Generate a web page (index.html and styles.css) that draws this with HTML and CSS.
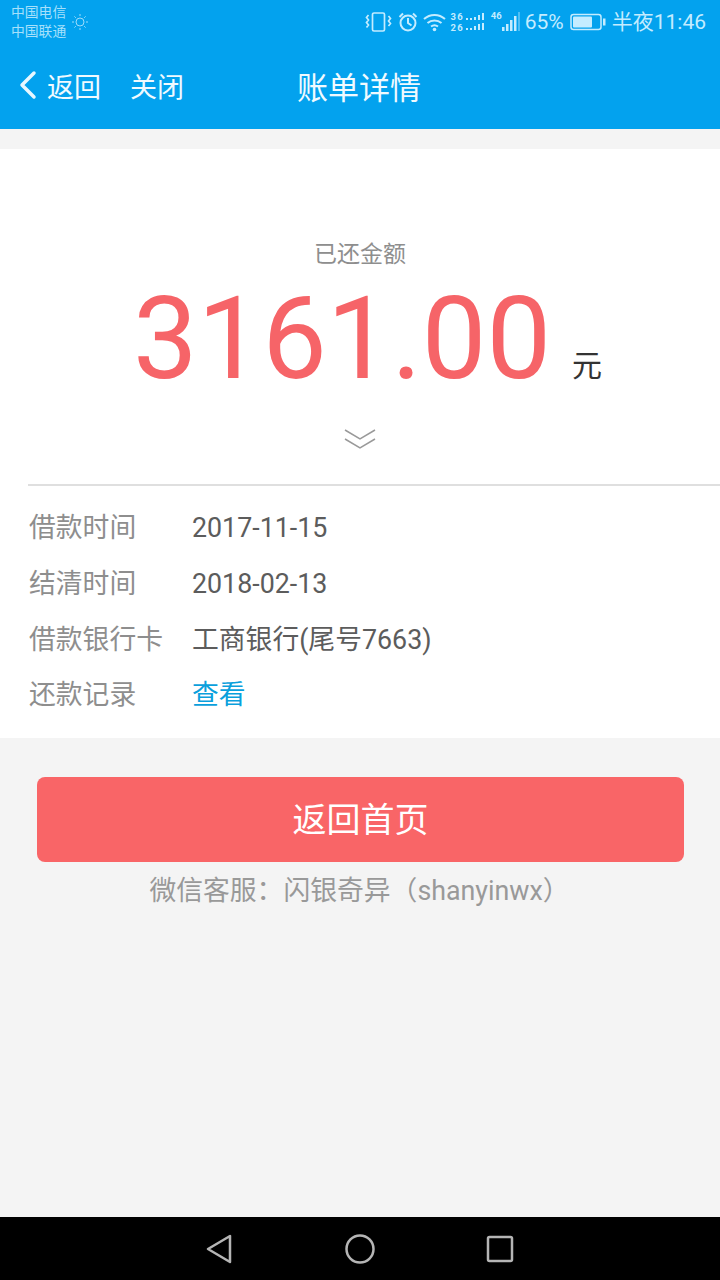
FILE: index.html
```html
<!DOCTYPE html>
<html>
	<head>
		<meta charset="utf-8">
		<title>账单详情</title>
		<link rel="stylesheet" href="styles.css">
	</head>
	<body>
		<div class="Phone">
			<div class="Header">
				<div class="StatusBar">
					<div class="Carrier">
						<div>中国电信</div>
						<div>中国联通</div>
					</div>
					<svg class="SunIcon" width="18" height="18" viewBox="0 0 18 18" fill="none" stroke="#9fdcfb" stroke-width="1">
						<circle cx="9" cy="9" r="4"/>
						<path d="M9 1v2M9 15v2M1 9h2M15 9h2M3.400 3.400l1.400 1.400M13.200 13.200l1.400 1.400M3.400 14.600l1.400-1.400M13.200 4.800l1.400-1.400"/>
					</svg>
					<div class="StatusRight">
						<svg class="IconVibrate" width="27" height="22" viewBox="0 0 27 22" fill="none" stroke="#c4ecff" stroke-width="1.700">
							<rect x="7.500" y="2" width="12" height="18" rx="1.500"/>
							<path d="M3.500 4l-2 2.500 2 2.500-2 2.500 2 2.500-2 2.500M23.500 5l2 2.500-2 2.500 2 2.500-2 2.500"/>
						</svg>
						<svg class="IconAlarm" width="20" height="22" viewBox="0 0 20 22" fill="none" stroke="#c4ecff" stroke-width="2">
							<circle cx="10" cy="12" r="7.500"/>
							<path d="M10 7v5l3.500 2.500M1.500 6l3.500-3.500M18.500 6l-3.500-3.500"/>
						</svg>
						<svg class="IconWifi" width="23" height="20" viewBox="0 0 23 20" fill="none" stroke="#c4ecff" stroke-width="2">
							<path d="M1 7c6-5.500 15-5.500 21 0M4.500 11c4-3.500 10-3.500 14 0M8 14.500c2-1.500 5-1.500 7 0"/>
							<circle cx="11.500" cy="17.500" r="1.800" fill="#c4ecff" stroke="none"/>
						</svg>
						<div class="Signal">
							<div class="SignalLabels"><span>36</span><span>26</span></div>
							<svg width="20" height="20" viewBox="0 0 20 20" fill="#c4ecff">
								<rect x="1" y="6" width="2" height="2"/><rect x="5" y="6" width="2" height="2"/><rect x="9" y="5" width="2" height="3"/><rect x="13" y="3" width="2" height="5"/><rect x="17" y="1" width="2" height="7"/>
								<rect x="1" y="16" width="2" height="2"/><rect x="5" y="16" width="2" height="2"/><rect x="9" y="14" width="2" height="4"/><rect x="13" y="12" width="2" height="6"/><rect x="17" y="11" width="2" height="7"/>
							</svg>
						</div>
						<div class="Signal Signal4g">
							<span class="Label4g">46</span>
							<svg width="18" height="22" viewBox="0 0 18 22" fill="#c4ecff">
								<rect x="0" y="16" width="2.500" height="4"/><rect x="4" y="13" width="2.500" height="7"/><rect x="8" y="9" width="2.500" height="11"/><rect x="12" y="5" width="2.500" height="15"/><rect x="16" y="1" width="2" height="19" opacity=".4"/>
							</svg>
						</div>
						<span class="StatusText Percent">65%</span>
						<svg class="IconBattery" width="36" height="18" viewBox="0 0 36 18">
							<rect x="1" y="1.500" width="30" height="15" rx="2.500" fill="none" stroke="#c4ecff" stroke-width="1.500"/>
							<rect x="3" y="3.500" width="19" height="11" rx="1" fill="#c4ecff"/>
							<rect x="33" y="5.500" width="2.500" height="7" fill="#c4ecff"/>
						</svg>
						<span class="StatusText Clock">半夜11:46</span>
					</div>
				</div>
				<div class="NavBar">
					<div class="NavLeft">
						<svg class="BackIcon" width="18" height="30" viewBox="0 0 18 30" fill="none" stroke="#e8f7ff" stroke-width="3.500" stroke-linecap="round" stroke-linejoin="round">
							<path d="M15 3L3 15l12 12"/>
						</svg>
						<span>返回</span>
						<span class="NavClose">关闭</span>
					</div>
					<div class="NavTitle">账单详情</div>
				</div>
			</div>

			<div class="Content">
				<div class="Card">
					<div class="AmountBlock">
						<div class="AmountLabel">已还金额</div>
						<div class="AmountRow">
							<span class="AmountValue">3161.00</span>
							<span class="AmountUnit">元</span>
						</div>
						<svg class="MoreIcon" width="32" height="22" viewBox="0 0 32 22" fill="none" stroke="#999" stroke-width="1.500">
							<path d="M1 2l15 9 15-9M1 11l15 9 15-9"/>
						</svg>
					</div>
					<div class="Details">
						<div class="DetailRow"><span class="DetailKey">借款时间</span><span class="DetailVal">2017-11-15</span></div>
						<div class="DetailRow"><span class="DetailKey">结清时间</span><span class="DetailVal">2018-02-13</span></div>
						<div class="DetailRow"><span class="DetailKey">借款银行卡</span><span class="DetailVal">工商银行(尾号7663)</span></div>
						<div class="DetailRow"><span class="DetailKey">还款记录</span><span class="DetailVal DetailLink">查看</span></div>
					</div>
				</div>
				<div class="Actions">
					<div class="ButtonRed">返回首页</div>
					<div class="Service">微信客服：闪银奇异（shanyinwx）</div>
				</div>
			</div>

			<div class="BottomBar">
				<svg width="30" height="32" viewBox="0 0 30 32" fill="none" stroke="#b5b5b5" stroke-width="2.500" stroke-linejoin="round">
					<path d="M26 3v26L4 16z"/>
				</svg>
				<svg width="32" height="32" viewBox="0 0 32 32" fill="none" stroke="#b5b5b5" stroke-width="2.500">
					<circle cx="16" cy="16" r="13.500"/>
				</svg>
				<svg width="28" height="28" viewBox="0 0 28 28" fill="none" stroke="#b5b5b5" stroke-width="2.500" stroke-linejoin="round">
					<rect x="2" y="2" width="24" height="24" rx="1.500"/>
				</svg>
			</div>
		</div>
	</body>
</html>
```

FILE: styles.css
```css
body {
	margin: 0;
	font-family: Roboto, "Noto Sans CJK SC", sans-serif;
}

.Phone {
	width: 720px;
	height: 1280px;
	display: flex;
	flex-direction: column;
	background-color: #f4f4f4;
	overflow: hidden;
}

.Header {
	height: 129px;
	flex-shrink: 0;
	background-color: #03a2ee;
}

.StatusBar {
	height: 43px;
	display: flex;
	align-items: center;
	padding: 0 14px 0 11px;
}

.Carrier {
	font-size: 13.800px;
	line-height: 19px;
	color: #a6e0fb;
	padding-top: 1px;
}

.SunIcon {
	margin: 0 0 0 5px;
}

.StatusRight {
	margin-left: auto;
	display: flex;
	align-items: center;
	color: #c4ecff;
}

.StatusText {
	font-size: 21px;
	line-height: 24px;
}

.IconAlarm {
	margin-left: 6px;
}

.IconWifi {
	margin-left: 5px;
}

.Percent {
	margin-left: 5px;
}

.IconBattery {
	margin-left: 6px;
}

.Clock {
	margin-left: 6px;
}

.Signal {
	display: flex;
	align-items: center;
	gap: 1px;
	margin-left: 4px;
}

.Signal4g {
	margin-left: 6px;
	gap: 0;
}

.SignalLabels {
	display: flex;
	flex-direction: column;
	gap: 2px;
	font-size: 9.500px;
	line-height: 9px;
	font-weight: 700;
	letter-spacing: 1.200px;
}

.Label4g {
	font-size: 9.500px;
	line-height: 10px;
	font-weight: 700;
	align-self: flex-start;
}

.NavBar {
	height: 86px;
	position: relative;
	display: flex;
	align-items: center;
	justify-content: center;
	color: #f0faff;
	padding-bottom: 2px;
	box-sizing: border-box;
}

.NavLeft {
	position: absolute;
	left: 19px;
	top: 0;
	height: 84px;
	display: flex;
	align-items: center;
	font-size: 27px;
}

.BackIcon {
	margin-right: 10px;
}

.NavClose {
	margin-left: 29px;
}

.NavTitle {
	font-size: 31px;
	margin-left: -2px;
}

.Content {
	flex: 1;
	padding-top: 20px;
}

.Card {
	height: 589px;
	background-color: #fff;
	box-sizing: border-box;
}

.AmountBlock {
	height: 337px;
	box-sizing: border-box;
	margin-left: 28px;
	padding-top: 91px;
	border-bottom: 2px solid #dfdfdf;
	display: flex;
	flex-direction: column;
	align-items: center;
}

.AmountLabel {
	margin-left: -28px;
	font-size: 23px;
	line-height: 30px;
	color: #8e8e8e;
}

.AmountRow {
	margin-left: -64px;
	height: 100px;
	margin-top: 19px;
	position: relative;
	display: flex;
	justify-content: center;
}

.AmountValue {
	font-size: 115px;
	line-height: 100px;
	color: #f66468;
}

.AmountUnit {
	position: absolute;
	left: 100%;
	margin-left: 21px;
	top: 57px;
	font-size: 30px;
	line-height: 40px;
	color: #333;
	white-space: nowrap;
}

.MoreIcon {
	margin-left: -28px;
	margin-top: 39px;
}

.Details {
	padding: 14px 0 0 29px;
}

.DetailRow {
	height: 56px;
	display: flex;
	align-items: center;
	font-size: 26.800px;
	line-height: 36px;
}

.DetailRow:last-child {
	margin-top: -1px;
}

.DetailKey {
	width: 163px;
	color: #8e8e8e;
}

.DetailVal {
	color: #5c5c5c;
}

.DetailLink {
	color: #0aa0dc;
}

.Actions {
	padding: 39px 36px 0 37px;
	display: flex;
	flex-direction: column;
	align-items: center;
}

.ButtonRed {
	width: 100%;
	height: 85px;
	border-radius: 8px;
	background-color: #f96567;
	color: #fff;
	font-size: 34px;
	padding-bottom: 5px;
	box-sizing: border-box;
	display: flex;
	align-items: center;
	justify-content: center;
}

.Service {
	margin: 11px 0 0 -2px;
	font-size: 26.800px;
	line-height: 36px;
	color: #999;
}

.BottomBar {
	height: 63px;
	flex-shrink: 0;
	background-color: #000;
	display: flex;
	align-items: center;
	justify-content: center;
	gap: 110px;
	padding-right: 2px;
	box-sizing: border-box;
}
```
